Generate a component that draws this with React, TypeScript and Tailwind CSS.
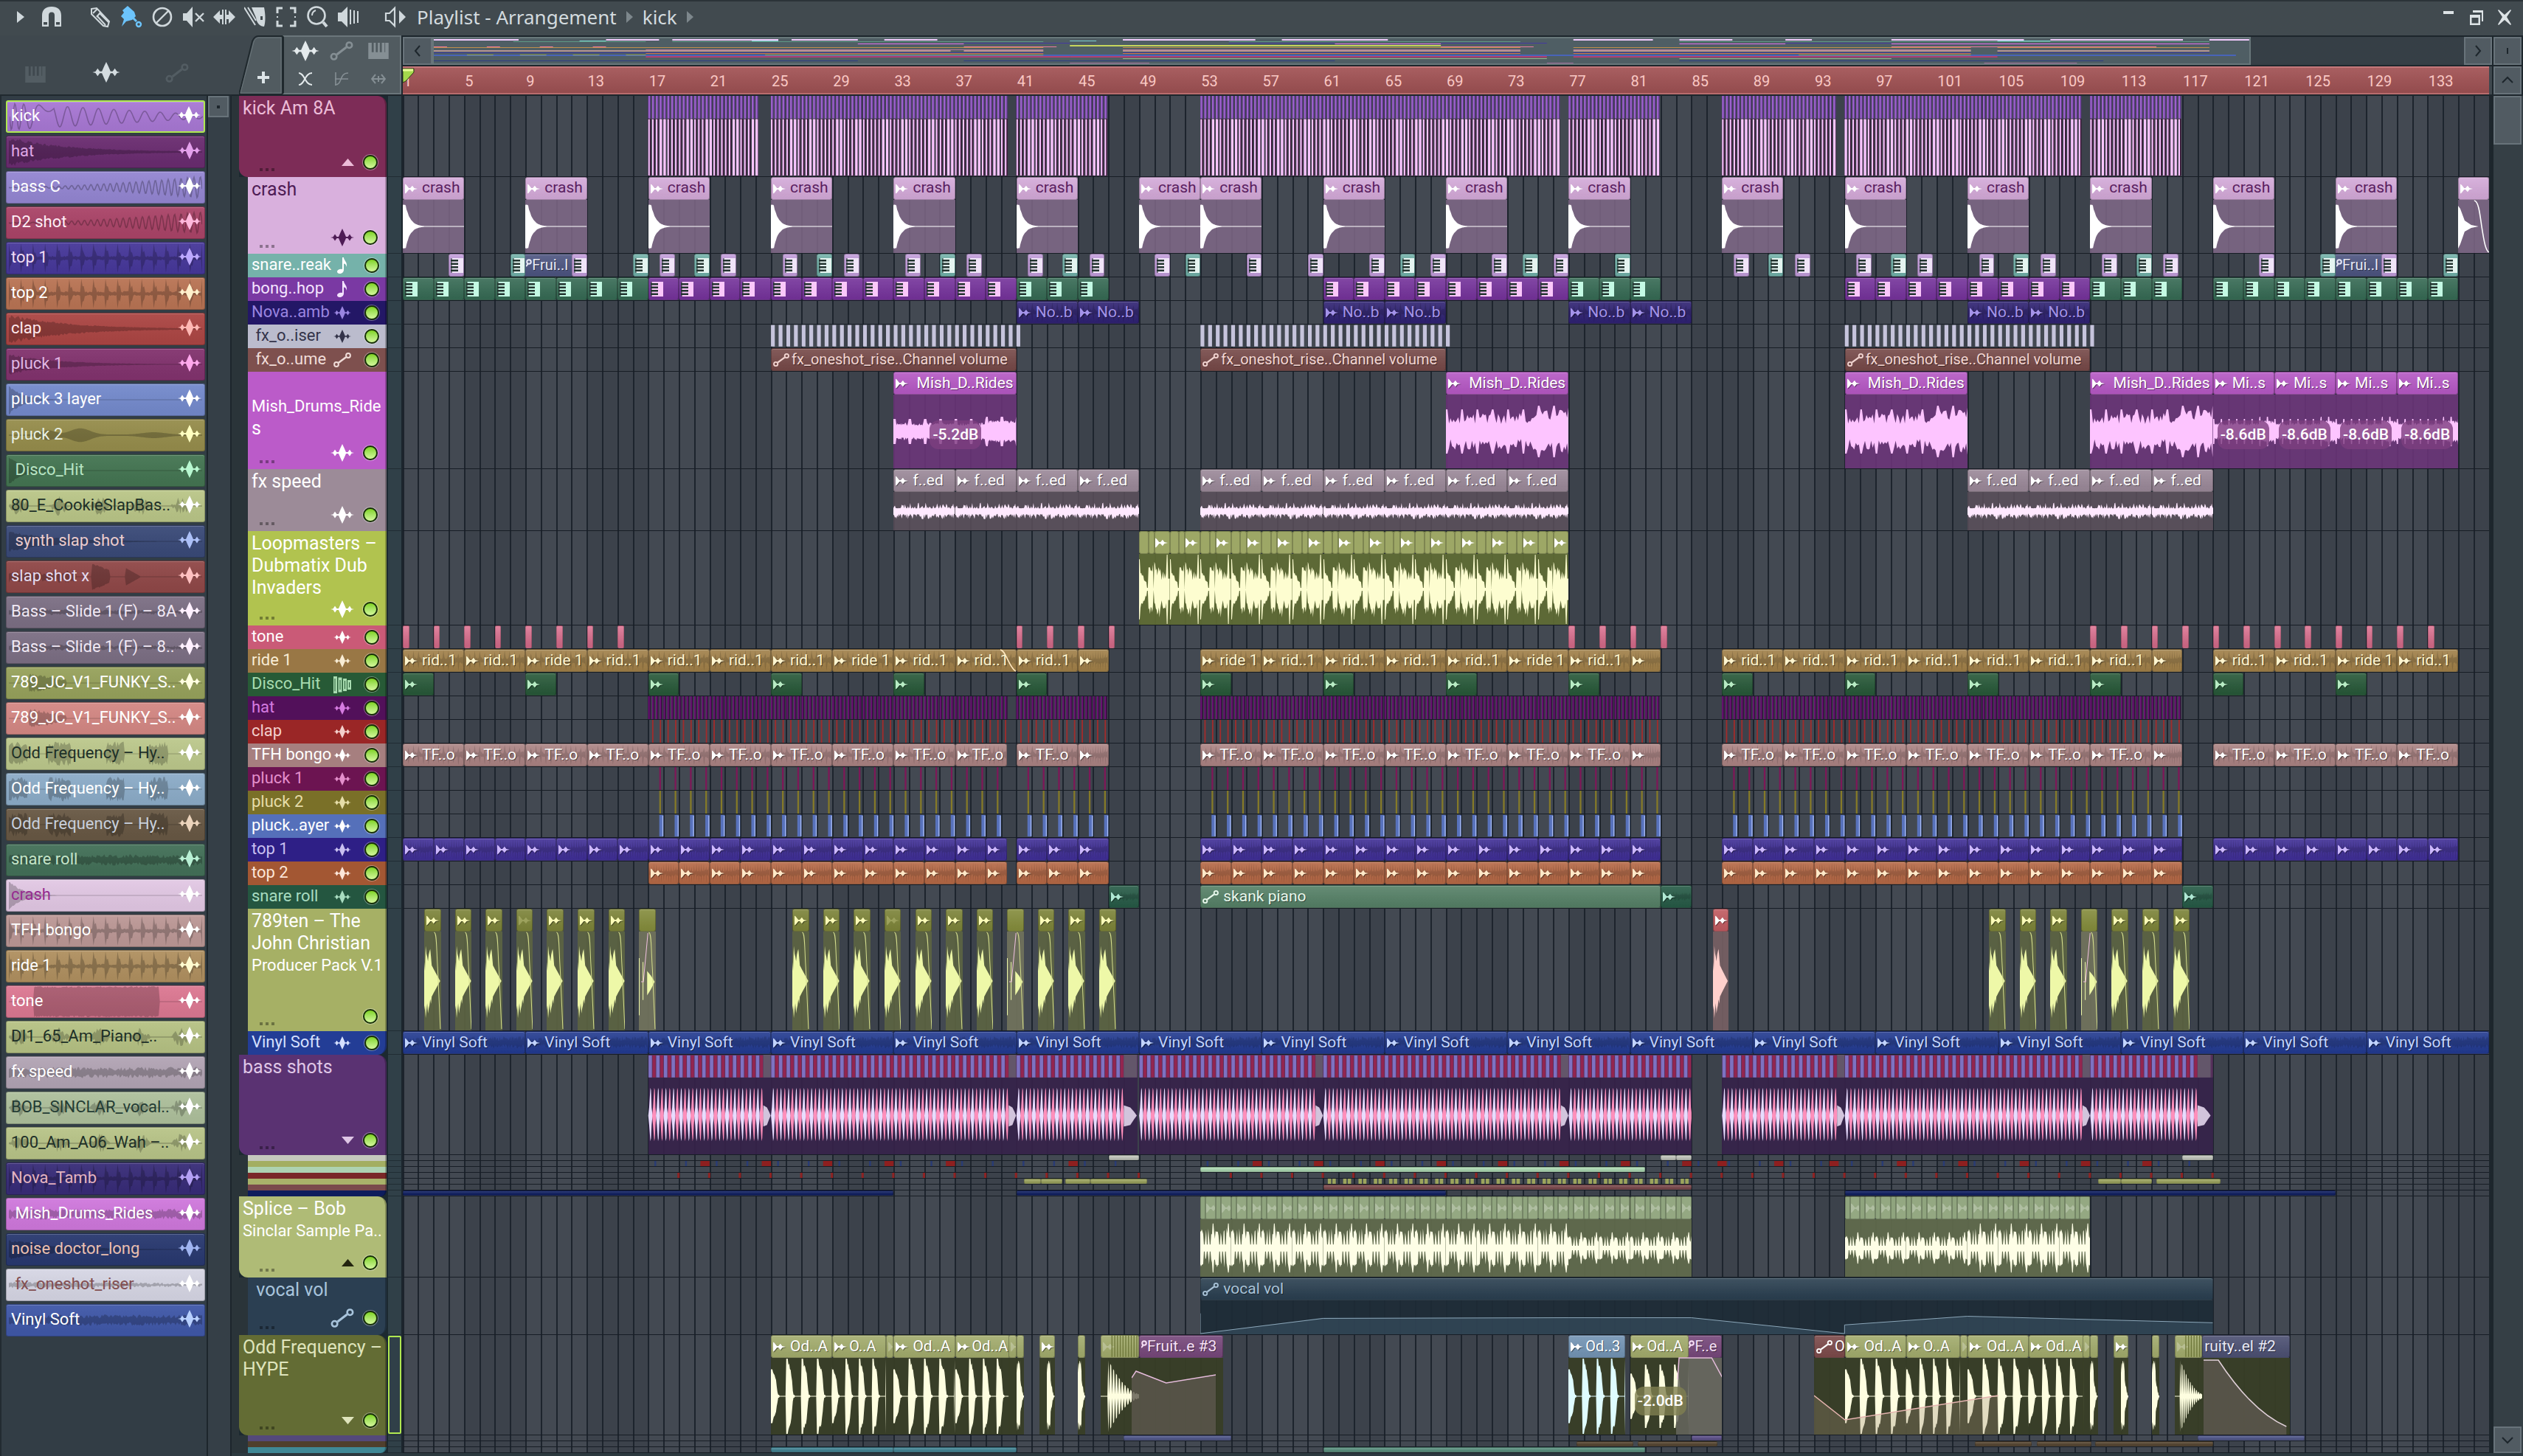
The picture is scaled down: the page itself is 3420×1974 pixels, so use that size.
import type { ReactNode } from 'react'

const BARS = 136

type Range = [number, number]
type IconKind = 'wave' | 'auto' | 'note' | 'bars' | 'up' | 'down' | 'none'

const pct = (bars: number) => `${(bars / BARS) * 100}%`

const rng = (seed: number) => () => {
  seed = (seed * 1664525 + 1013904223) % 4294967296
  return seed / 4294967296
}

// closed, mirrored waveform in a box n wide and 100 high
function wavePath(seed: number, n: number, env: (t: number, r: number) => number) {
  const r = rng(seed)
  let top = ''
  let bottom = ''
  for (let i = 0; i <= n; i++) {
    const a = Math.min(1, env(i / n, r())) * 50
    const b = Math.min(1, env(i / n, r())) * 50
    top += `L${i} ${(50 - a).toFixed(1)}`
    bottom = `L${i} ${(50 + b).toFixed(1)}${bottom}`
  }
  return `M0 50${top}${bottom}Z`
}

const split = (s: number, e: number, step: number): Range[] => {
  const out: Range[] = []
  for (let b = s; b < e - 0.01; b += step) out.push([b, Math.min(b + step, e)])
  return out
}
const steps = (s: number, e: number, step: number) => split(s, e, step).map(([b]) => b)

const PATHS = {
  crash: wavePath(3, 83, (t, r) => Math.max(0.015, t < 0.05 ? 0.78 + r * 0.06 : (0.72 + r * 0.08) * Math.exp(-(t - 0.05) * 13))),
  mish: wavePath(11, 160, (t, r) => (t % 0.125 < 0.02 ? 0.34 : 0.16 + r * 0.08) + (t > 0.75 ? 0.06 : 0)),
  mishLoud: wavePath(19, 80, (t, r) => (t % 0.125 < 0.02 ? 0.6 : 0.2 + r * 0.3) + (t > 0.7 ? 0.1 : 0)),
  speed: wavePath(23, 80, (_, r) => 0.14 + r * r * 0.3),
  loop: wavePath(31, 42, (t, r) => {
    if (t < 0.03) return 0.85
    if (t < 0.26) return 0.52 - t * 1.7 + r * 0.1
    if (t < 0.3) return 0.04
    if (t < 0.47) return 0.45 + r * 0.3
    if (t < 0.5) return 0.02
    if (t < 0.72) return 0.35 + r * 0.45
    if (t < 0.9) return 0.22 + r * 0.35
    return t < 0.95 ? 0.98 : 0.3
  }),
  hit: wavePath(41, 84, (t, r) => {
    const p = (t * 4) % 1
    const peak = t < 0.2 ? 0.7 : 0.98
    if (p < 0.12) return peak
    if (p < 0.44) return peak * (0.9 - r * 0.12 - 0.75 * (p / 0.44) ** 4)
    return p < 0.56 ? 0.04 : 0.012
  }),
  pack: wavePath(47, 22, (t, r) => {
    if (t < 0.12) return 0.72 * r + 0.2
    if (t < 0.45) return 0.36 + r * 0.32
    return Math.max(0, (0.96 - t) * 0.62)
  }),
  chop: wavePath(73, 22, (t, r) => (t < 0.5 ? 0.6 + r * 0.35 : Math.max(0.02, 0.95 - t - r * 0.1))),
  splice: wavePath(53, 42, (t, r) => {
    const p = (t * 2) % 1
    if (p < 0.18) return 0.55 + r * 0.15
    if (p > 0.78 && p < 0.86) return 0.85
    return Math.floor(p * 10) % 2 ? 0.4 * r + 0.3 : 0.12
  }),
  vinyl: wavePath(61, 170, (t, r) => (t > 0.45 ? 0.15 : 0.05) + r * 0.45),
  ticks: wavePath(67, 60, (t, r) => (Math.floor(t * 60) % 5 === 0 ? 0.6 + r * 0.4 : 0.1 + r * 0.25)),
}

function Wave({ d, n, color, opacity = 1 }: { d: string; n: number; color: string; opacity?: number }) {
  return (
    <svg className="h-full w-full" viewBox={`0 0 ${n} 100`} preserveAspectRatio="none" aria-hidden="true">
      <path d={d} fill={color} opacity={opacity} />
    </svg>
  )
}

function WaveIcon({ className }: { className: string }) {
  return (
    <svg className={className} viewBox="0 0 32 24" fill="currentColor" aria-hidden="true">
      <path d="M0 12L3.5 11.2L6 7.5L8.5 11H11L13.6 5L16 0L18.4 5L21 11H23.5L26 7.5L28.5 11.2L32 12L28.5 12.8L26 16.5L23.5 13H21L18.4 19L16 24L13.6 19L11 13H8.5L6 16.5L3.5 12.8Z" />
    </svg>
  )
}

function AutoIcon({ className }: { className: string }) {
  return (
    <svg className={className} viewBox="0 0 24 20" fill="none" stroke="currentColor" strokeWidth="2" aria-hidden="true">
      <circle cx="4" cy="16" r="2.9" />
      <circle cx="20" cy="4" r="2.9" />
      <path d="M7 13.8L17 6.2" strokeWidth="2.4" />
    </svg>
  )
}

function ClipWaveIcon({ className = '' }: { className?: string }) {
  return (
    <svg className={`h-[14px] w-[17px] shrink-0 ${className}`} viewBox="0 0 18 14" fill="currentColor" aria-hidden="true">
      <path d="M0 0L2 1.5L5.5 6H7.5L10.5 2.5L13.2 6L18 7L13.2 8L10.5 11.5L7.5 8H5.5L2 12.5L0 14Z" />
    </svg>
  )
}

function KeysIcon({ color }: { color: string }) {
  return (
    <svg className="h-5 w-[17px] shrink-0" viewBox="0 0 17 20" aria-hidden="true">
      <path d="M1 0H17V20H1Z" fill={color} />
      <path d="M0 3.2H10M0 7.7H10M0 12.2H10M0 16.7H10" stroke="#22332f" strokeWidth="2.6" />
      <path d="M1 0V20" stroke="#22332f" strokeWidth="1" />
    </svg>
  )
}

function PianoIcon({ className }: { className: string }) {
  return (
    <svg className={className} viewBox="0 0 30 24" fill="currentColor" aria-hidden="true">
      <path d="M0 0H5V14H8V0H11V14H14V0H17V14H20V0H24V14H25V0H30V24H0Z" />
    </svg>
  )
}

type ClipProps = {
  s: number
  e: number
  color: string
  text?: string
  label?: string
  icon?: 'wave' | 'auto' | 'cut' | 'keys' | 'faint' | 'none'
  tight?: boolean
  inner?: string
  innerN?: number
  body?: string
  children?: ReactNode
}

function Clip({ s, e, color, text = '#ffffff', label, icon = 'wave', tight, inner, innerN = 60, body, children }: ClipProps) {
  return (
    <div className="absolute inset-y-0 flex flex-col overflow-hidden" style={{ left: pct(s), width: pct(e - s) }}>
      <div
        className="relative flex h-[31px] shrink-0 items-center overflow-hidden rounded-[3px] border border-black/25 bg-gradient-to-b from-white/10 to-black/5 pl-[2px] shadow-[inset_0_1px_0_rgba(255,255,255,0.18)]"
        style={{ backgroundColor: color, color: text }}
      >
        {inner && (
          <div className="absolute inset-0">
            <Wave d={inner} n={innerN} color="#000000" opacity={0.14} />
          </div>
        )}
        {icon === 'wave' && <ClipWaveIcon className="relative drop-shadow-[1px_1px_0_rgba(0,0,0,0.4)]" />}
        {icon === 'faint' && <ClipWaveIcon className="relative opacity-25" />}
        {icon === 'auto' && <AutoIcon className="relative h-5 w-[22px] shrink-0" />}
        {icon === 'cut' && (
          <svg className="h-5 w-2 shrink-0" viewBox="0 0 8 20" fill="none" stroke="currentColor" strokeWidth="2" aria-hidden="true">
            <circle cx="4" cy="5" r="2.8" />
            <path d="M2.500 8L0 11" />
          </svg>
        )}
        {icon === 'keys' && <KeysIcon color={text} />}
        {label && (
          <span
            className={`relative pb-[2px] leading-7 whitespace-pre ${tight ? 'text-[20px]' : 'text-[21px]'} ${icon === 'none' || icon === 'cut' ? '' : tight ? 'pl-[3px]' : 'pl-[6px]'} ${text === '#5a2060' ? '' : '[text-shadow:1px_1px_0_rgba(0,0,0,0.45)]'}`}
          >
            {label}
          </span>
        )}
      </div>
      {body && (
        <div className="relative min-h-0 flex-1" style={{ backgroundColor: body }}>
          {children}
        </div>
      )}
    </div>
  )
}

// many hair-thin clips of one lane
function Stripes({ at, w, color, y = 0, h = 100, opacity = 1 }: { at: number[]; w: number; color: string; y?: number; h?: number; opacity?: number }) {
  return (
    <svg className="absolute inset-0 h-full w-full" viewBox={`0 0 ${BARS} 100`} preserveAspectRatio="none" aria-hidden="true">
      {at.map((b) => (
        <rect key={b} x={b} y={y} width={w} height={h} fill={color} opacity={opacity} />
      ))}
    </svg>
  )
}

function Strip({ s, e, color }: { s: number; e: number; color: string }) {
  return (
    <div
      className="absolute inset-y-0 rounded-[2px] border border-black/20 bg-gradient-to-b from-white/15 to-black/10"
      style={{ left: pct(s), width: pct(e - s), backgroundColor: color }}
    />
  )
}

function Db({ value, className }: { value: string; className: string }) {
  return (
    <span className={`absolute rounded-xl px-1 text-[21px] leading-[39px] font-medium text-white ${className}`}>
      {value}
    </span>
  )
}

const FULL: Range[] = [[16, 39.4], [40, 46], [52, 82], [86, 116]]
const inFull = (step: number, off = 0) => FULL.flatMap(([s, e]) => steps(s + off, e, step))

function KickLane() {
  const groups: Range[] = [[16, 23.2], [24, 39.4], [40, 46], [52, 75.5], [76, 82], [86, 93.4], [94, 109.4], [110, 116]]
  const at = groups.flatMap(([s, e]) => steps(s, e, 0.25))
  const wide = at.filter((_, i) => [3, 4, 10, 11].includes(i % 12))
  return (
    <>
      <Stripes at={at} w={0.17} y={0} h={28} color="#5b3684" />
      <Stripes at={at} w={0.11} y={0} h={28} color="#9c62cc" />
      <Stripes at={at} w={0.17} y={28.5} h={71} color="#3a1236" />
      <Stripes at={at} w={0.1} y={29} h={70} color="#f8c6ff" />
      <Stripes at={wide} w={0.15} y={29} h={70} color="#f8c6ff" />
    </>
  )
}

const CRASHES = [0, 8, 16, 24, 32, 40, 48, 52, 60, 68, 76, 86, 94, 102, 110, 118, 126, 134]

function CrashLane() {
  return CRASHES.map((b) => (
    <Clip key={b} s={b} e={b === 134 ? 136 : b + 4} color="#d3a9d8" text="#ffffff" icon="none" body="rgba(128,104,136,0.85)">
      <div className="absolute -top-[22px] left-[3px] h-[14px] w-[17px] text-white">
        <ClipWaveIcon className="block" />
      </div>
      {b !== 134 && <span className="absolute -top-[31px] left-[26px] text-[21px] leading-7 text-[#5a2060]">crash</span>}
      {b === 134 ? (
        <svg className="h-full w-full" viewBox="0 0 42 72" preserveAspectRatio="none" aria-hidden="true">
          <path d="M0 8L3 12L9 28L18 34L28 36L18 38L9 43L3 60L0 66Z" fill="#fff" />
          <path d="M22 1C28 1 30 20 32 34C36 60 38 68 42 71" fill="none" stroke="#fff" strokeWidth="1.6" />
        </svg>
      ) : (
        <Wave d={PATHS.crash} n={83} color="#fff" />
      )}
    </Clip>
  ))
}

function SnareLane() {
  const groups = [16, 24, 32, 40, 86, 94, 102, 110]
  const pink = [3, 11, ...groups.flatMap((g) => [g + 0.75, g + 4.75]), 49, 55, 59, 63, 67, 71, 75, 121, 129]
  const teal = [7, 15, ...groups.map((g) => g + 3), 51, 65, 73, 79, 125, 133]
  return (
    <>
      {[7.9, 125.9].map((b) => (
        <Clip key={b} s={b} e={b + 3.2} color="#4c5480" icon="cut" label="Frui..l" text="#e8e8f4" tight />
      ))}
      {pink.map((b) => (
        <Clip key={b} s={b} e={b + 1} color="#c09ad8" icon="keys" text="#f0e4f8" />
      ))}
      {teal.map((b) => (
        <Clip key={b} s={b} e={b + 1} color="#6faea6" icon="keys" text="#e4f4f0" />
      ))}
    </>
  )
}

function BongoPatternLane() {
  const green = [...split(0, 16, 2), ...split(40, 46, 2), ...split(76, 82, 2), ...split(110, 116, 2), ...split(118, 134, 2)]
  const purple = [...split(16, 40, 2), ...split(60, 76, 2), ...split(94, 110, 2)]
  return (
    <>
      {green.map(([s, e]) => (
        <Clip key={s} s={s} e={e} color="#366a54" icon="keys" text="#c4fae4" />
      ))}
      {purple.map(([s, e]) => (
        <Clip key={s} s={s} e={e} color="#75339b" icon="keys" text="#fbc8fa" />
      ))}
    </>
  )
}

const rideLabel = (s: number) => ([8, 28, 52, 72, 126].includes(s) ? 'ride 1' : 'rid..1')

function LoopLane({ ranges, color, text, label }: { ranges: Range[]; color: string; text?: string; label?: (s: number) => string }) {
  return ranges.map(([s, e]) => (
    <Clip key={s} s={s} e={e} color={color} text={text} inner={PATHS.ticks} tight={e - s < 4} label={label && e - s > 3 ? label(s) : undefined} />
  ))
}

function RideLane() {
  return (
    <>
      <LoopLane ranges={[...split(0, 44, 4), [44, 46], ...four]} color="#a07f48" text="#fff6d0" label={rideLabel} />
      <svg className="absolute inset-y-0 h-full" style={{ left: pct(38.9), width: pct(1.1) }} viewBox="0 0 23 31" preserveAspectRatio="none" aria-hidden="true">
        <path d="M1 1C9 2 12 24 22 30" fill="none" stroke="#ffe8c0" strokeWidth="1.6" />
      </svg>
    </>
  )
}

function MishLane() {
  const clips: [number, number, string, string?][] = [
    [32, 40, 'Mish_D..Rides', '-5.2dB'], [68, 76, 'Mish_D..Rides'], [94, 102, 'Mish_D..Rides'], [110, 118, 'Mish_D..Rides'],
    [118, 122, 'Mi..s', '-8.6dB'], [122, 126, 'Mi..s', '-8.6dB'], [126, 130, 'Mi..s', '-8.6dB'], [130, 134, 'Mi..s', '-8.6dB'],
  ]
  return clips.map(([s, e, label, db]) => (
    <Clip key={s} s={s} e={e} color="#b558c4" label={`${e - s > 4 ? ' ' : ''}${label}`} body="rgba(108,52,122,0.88)">
      <Wave d={db ? PATHS.mish : PATHS.mishLoud} n={db ? 160 : 80} color="#fdc4ff" />
      {db && <Db value={db} className={e - s > 4 ? 'top-[35px] left-[49px] bg-[#7d3f80]/80' : 'top-[35px] left-[6px] bg-[#7d3f80]/80'} />}
    </Clip>
  ))
}

function SpeedLane() {
  return [...split(32, 48, 4), ...split(52, 76, 4), ...split(102, 118, 4)].map(([s, e]) => (
    <Clip key={s} s={s} e={e} color="#9a8898" label="f..ed" body="rgba(92,80,92,0.85)">
      <Wave d={PATHS.speed} n={80} color="#ffe9ff" />
    </Clip>
  ))
}

function DubLane() {
  return split(48, 76, 2).map(([s, e]) => (
    <div key={s}>
      <Clip s={s} e={e} color="#5e6b36" icon="none" body="rgba(96,108,52,0.92)">
        <Wave d={PATHS.loop} n={42} color="#fdfdd0" />
      </Clip>
      <div className="absolute top-0 h-[31px]" style={{ left: pct(s), width: pct(2) }}>
        <div className="flex h-full">
          <div className="w-[30%] rounded-[3px] border border-black/20 bg-[#9da766]" />
          <div className="w-[20%] rounded-[3px] border border-black/20 bg-[#9da766]" />
          <div className="flex w-[50%] items-center rounded-[3px] border border-black/20 bg-[#9da766] text-white">
            <ClipWaveIcon />
          </div>
        </div>
      </div>
    </div>
  ))
}

function PackLane() {
  const at = [...steps(1.4, 15, 2), ...steps(25.4, 39, 2), 41.4, 43.4, 45.4, 103.4, 105.4, 107.4, 111.4, 113.4, 115.4]
  return (
    <>
      {at.map((b, i) => (
        <Clip key={b} s={b} e={b + 1.08} color="#7c8338" text="#fbfbb8" icon={i === 3 || i === 10 ? 'faint' : 'wave'} body="rgba(92,100,66,0.92)">
          <Wave d={PATHS.pack} n={22} color="#eef8a8" />
          <svg className="absolute inset-0 h-full w-full" viewBox="0 0 22 130" preserveAspectRatio="none" aria-hidden="true">
            <path d="M13 1C17 1 16 20 18 50L21.5 128" fill="none" stroke="#d3dc8c" strokeWidth="1" />
          </svg>
        </Clip>
      ))}
      {[15.4, 39.4, 109.4].map((b) => (
        <Clip key={b} s={b} e={b + 1.08} color="#848c3c" icon="none" body="rgba(112,114,92,0.95)">
          <svg className="h-full w-full" viewBox="0 0 22 130" preserveAspectRatio="none" aria-hidden="true">
            <path d="M0 35H1V110H0ZM5 40H6V90H5ZM11 52L16 58L21 66L16 76L11 84Z" fill="#eef8a8" />
            <path d="M3 66H6L12 2" fill="none" stroke="#f0c0e0" />
            <path d="M13 1C17 1 16 20 18 50L21.5 128" fill="none" stroke="#d3dc8c" />
          </svg>
        </Clip>
      ))}
      <Clip s={85.4} e={86.4} color="#c05a60" icon="wave" body="rgba(120,96,100,0.9)">
        <Wave d={PATHS.pack} n={22} color="#ffd0cc" />
      </Clip>
    </>
  )
}

function BassLane() {
  const tails = [23.5, 39.5, 47, 59.5, 75.5, 93.5, 109.5, 117]
  const free = (b: number) => !tails.some((t) => b >= t - 0.01 && b < t + 0.5) && !(b >= 47 && b < 48) && !(b >= 117)
  const red = [...steps(16, 84, 0.5), ...steps(86, 118, 0.5)].map((b) => b + 0.25).filter((b) => free(b))
  const violet = [...steps(16, 84, 0.5), ...steps(86, 118, 0.5)].filter((b) => free(b))
  const spike = (b: number) =>
    `M${b} 71L${b + 0.06} 60L${b + 0.14} 33L${b + 0.18} 36L${b + 0.22} 60L${b + 0.26} 67L${b + 0.26} 75L${b + 0.22} 84L${b + 0.18} 102L${b + 0.14} 106L${b + 0.06} 84Z`
  const blocks: Range[] = [[16, 47.9], [48, 84], [86, 118]]
  return (
    <>
      {blocks.map(([s, e]) => (
        <div key={s} className="absolute top-[31px] bottom-0 bg-[#36234a]/92" style={{ left: pct(s), width: pct(e - s) }} />
      ))}
      <svg className="absolute inset-0 h-full w-full" viewBox={`0 0 ${BARS} 136`} preserveAspectRatio="none" aria-hidden="true">
        {blocks.map(([s, e]) => (
          <rect key={s} x={s} y="0" width={e - s} height="31" fill="#57305c" />
        ))}
        {violet.map((b) => (
          <rect key={b} x={b + 0.02} y="1" width="0.22" height="30" fill="#7d72c2" />
        ))}
        {red.map((b) => (
          <rect key={b} x={b + 0.03} y="1" width="0.2" height="30" fill="#93254f" />
        ))}
        <g transform="translate(0 12)">
          <path d={red.map(spike).join('')} fill="#ff8fbb" />
          <path d={violet.map(spike).join('')} fill="#e8dcff" />
          {tails.map((t) => {
            const w = t === 47 || t === 117 ? 0.85 : 0.48
            return (
              <g key={t}>
                <rect x={t} y="-12" width={w} height="31" fill="#63566a" />
                <path d={`M${t} 57L${t + w * 0.5} 60L${t + w * 0.8} 66L${t + w} 71L${t + w * 0.8} 76L${t + w * 0.5} 84L${t} 86Z`} fill="#d2c4dc" />
              </g>
            )
          })}
        </g>
      </svg>
    </>
  )
}

function SpliceLane() {
  return [...split(52, 84, 2), ...split(94, 110, 2)].map(([s, e]) => {
    const quiet = (s >= 76 && s < 84) || (s >= 94 && s < 102)
    return (
      <div key={s}>
        <Clip s={s} e={e} color="#7a8c66" icon="none" body="rgba(96,106,76,0.95)">
          <div className={quiet ? 'h-full py-[14px]' : 'h-full'}>
            <Wave d={PATHS.splice} n={42} color="#fefee6" />
          </div>
        </Clip>
        <div className="absolute top-0 flex h-[31px]" style={{ left: pct(s), width: pct(2) }}>
          {[0, 1].map((i) => (
            <div key={i} className="flex w-1/2">
              <div className="w-1/3 rounded-[2px] border border-black/20 bg-[#8fa47e]" />
              <div className="w-2/3 overflow-hidden rounded-[2px] border border-black/20 bg-[#94a882] pt-2 text-white">
                <ClipWaveIcon className="opacity-25" />
              </div>
            </div>
          ))}
        </div>
      </div>
    )
  })
}

function VocalLane() {
  return (
    <Clip s={52} e={118} color="#2a3f50" text="#a9c3d8" icon="auto" label="vocal vol" body="rgba(29,43,54,0.92)">
      <svg className="h-full w-full" viewBox="0 0 66 47" preserveAspectRatio="none" aria-hidden="true">
        <path d="M0 46L8 24H32L42 46V34L50 22L66 31V47H0Z" fill="#3a5264" opacity="0.6" />
        <path d="M0 18V46L8 25L24 24H32L42 46V34L50 22L66 31" fill="none" stroke="#8ba6b8" strokeWidth="1" vectorEffect="non-scaling-stroke" />
      </svg>
    </Clip>
  )
}

function HypeLane() {
  const dark = 'rgba(56,62,38,0.95)'
  const olive = '#a2ab6c'
  const block = (o: number) => (
    <>
      {([[0, 4, 'Od..A'], [4, 7.5, 'O..A'], [8, 12, 'Od..A'], [12, 15.6, 'Od..A']] as [number, number, string][]).map(([s, e, label]) => (
        <Clip key={s} s={o + s} e={o + e} color={olive} label={label} tight={e - s < 4} body={dark}>
          <Wave d={PATHS.hit} n={84} color="#fefee0" />
        </Clip>
      ))}
      {[7.5, 15.5, 16].map((b) => (
        <Clip key={b} s={o + b} e={o + b + 0.5} color={olive} icon={b === 16 ? 'none' : 'faint'} body={dark}>
          {b === 16 && <Wave d={PATHS.chop} n={22} color="#fefee0" />}
        </Clip>
      ))}
      <Clip s={o + 17.5} e={o + 18.5} color={olive} body={dark}>
        <div className="ml-auto h-full w-1/2">
          <Wave d={PATHS.chop} n={22} color="#fefee0" />
        </div>
      </Clip>
      <Clip s={o + 20} e={o + 20.5} color={olive} icon="none" body={dark}>
        <Wave d={PATHS.chop} n={22} color="#fefee0" />
      </Clip>
    </>
  )
  const roll = (s: number, e: number) => (
    <>
      <Clip s={s} e={e} color={olive} icon="faint" body={dark}>
        <Wave d={wavePath(71, 40, (t) => (t < 0.2 ? 0.01 : Math.floor(t * 40) % 3 ? (1.1 - t) ** 2 * 1.1 + 0.05 : 0.05))} n={40} color="#fefee0" />
      </Clip>
      <Stripes at={steps(s + 0.7, e - 0.1, 0.18)} w={0.06} h={22} color="#6c7538" />
    </>
  )
  return (
    <>
      <Clip s={92} e={94} color="#7c4a4a" icon="auto" label="O" body={dark} tight />
      {block(24)}
      {block(94)}
      <Clip s={48} e={53.5} color="#76477a" text="#f6e0f6" icon="cut" label="Fruit..e #3" body={dark} />
      {roll(45.5, 48)}
      <svg className="absolute bottom-0 h-[105px]" style={{ left: pct(47.5), width: pct(5.5) }} viewBox="0 0 115 105" preserveAspectRatio="none" aria-hidden="true">
        <path d="M0 28L6 19L47 35L115 24V105H0Z" fill="#5c574e" opacity="0.8" />
        <path d="M0 28L6 19L47 35L115 24" fill="none" stroke="#e6bcdc" strokeWidth="1.5" />
      </svg>
      <Clip s={76} e={79.7} color="#7394b4" label="Od..3" body={dark} tight>
        <Wave d={PATHS.hit} n={84} color="#dffcff" />
      </Clip>
      <Clip s={83.7} e={86} color="#76477a" text="#f6e0f6" icon="cut" label="F..e" tight body="rgba(100,100,92,0.95)" />
      <Clip s={80} e={83.8} color={olive} label="Od..A" body={dark} tight>
        <div className="h-full py-2">
          <Wave d={PATHS.hit} n={84} color="#fefee0" />
        </div>
      </Clip>
      <svg className="absolute bottom-0 h-[105px]" style={{ left: pct(83), width: pct(3) }} viewBox="0 0 62 105" preserveAspectRatio="none" aria-hidden="true">
        <path d="M0 105V80L4 1H52L62 25V105Z" fill="#66665e" opacity="0.85" />
        <path d="M2 30L4 1H48L62 27" fill="none" stroke="#e6bcdc" strokeWidth="1.5" />
      </svg>
      <div className="absolute top-[70px]" style={{ left: pct(80.3), width: pct(3.4) }}>
        <Db value="-2.0dB" className="left-0 bg-[#7f8050]/80" />
      </div>
      <svg className="absolute bottom-0 h-[105px]" style={{ left: pct(92), width: pct(12) }} viewBox="0 0 250 105" preserveAspectRatio="none" aria-hidden="true">
        <path d="M0 52L42 85L250 52V105H0Z" fill="#a08a78" opacity="0.3" />
        <path d="M0 52L42 85L250 52" fill="none" stroke="#e6b4b0" strokeWidth="1.5" />
      </svg>
      <Clip s={117.3} e={123} color="#4c5072" text="#e8e8f4" icon="none" label="ruity..el #2" body={dark} />
      {roll(115.5, 117.3)}
      <svg className="absolute bottom-0 h-[105px]" style={{ left: pct(117.4), width: pct(5.4) }} viewBox="0 0 112 105" preserveAspectRatio="none" aria-hidden="true">
        <path d="M0 4H20C50 50 80 80 112 94V105H0Z" fill="#5c574e" opacity="0.85" />
        <path d="M0 4H20C50 50 80 80 112 94" fill="none" stroke="#e0d0d8" strokeWidth="1.5" />
      </svg>
    </>
  )
}

type Track = {
  name: string[]
  h: string
  color: string
  text: string
  icon: IconKind
  group?: boolean
  last?: boolean
  selected?: boolean
  lane: ReactNode
}

const strips = (list: [number, number][], color: string) => list.map(([s, e]) => <Strip key={s} s={s} e={e} color={color} />)
const mini = (color: string, lane: ReactNode, last = false): Track => ({ name: [], h: 'h-2', color, text: '', icon: 'none', last, lane })

const four: Range[] = [...split(52, 80, 4), [80, 82], ...split(86, 114, 4), [114, 116], ...split(118, 134, 4)]
const two: Range[] = [...split(40, 46, 2), ...split(52, 82, 2), ...split(86, 116, 2)]

const TRACKS: Track[] = [
  { name: ['kick Am 8A'], h: 'h-[110px]', color: '#7d2c57', text: '#ecbcd8', icon: 'up', group: true, lane: <KickLane /> },
  { name: ['crash'], h: 'h-[104px]', color: '#d9b0dd', text: '#4e1c55', icon: 'wave', lane: <CrashLane /> },
  { name: ['snare..reak'], h: 'h-8', color: '#75b2aa', text: '#ffffff', icon: 'note', lane: <SnareLane /> },
  { name: ['bong..hop'], h: 'h-8', color: '#7a39a3', text: '#f4e4ff', icon: 'note', lane: <BongoPatternLane /> },
  { name: ['Nova..amb'], h: 'h-8', color: '#231766', text: '#9a85e0', icon: 'wave', lane: <LoopLane ranges={[[40, 44], [44, 48], [60, 64], [64, 68], [76, 80], [80, 84], [102, 106], [106, 110]]} color="#2f2272" text="#a493ea" label={() => 'No..b'} /> },
  { name: [' fx_o..iser'], h: 'h-8', color: '#bbbccd', text: '#34344a', icon: 'wave', lane: <Stripes at={[...steps(24, 40.5, 0.5), ...steps(52, 68.5, 0.5), ...steps(94, 110.5, 0.5)]} w={0.25} y={2} h={94} color="#c6c4dc" /> },
  { name: [' fx_o..ume'], h: 'h-8', color: '#7e504e', text: '#f0dcd8', icon: 'auto', lane: [24, 52, 94].map((b) => <Clip key={b} s={b} e={b + 16} color="#764948" text="#f3d6d2" icon="auto" tight label="fx_oneshot_rise..Channel volume" />) },
  { name: [' ', 'Mish_Drums_Ride', 's'], h: 'h-[132px]', color: '#bb5bc9', text: '#ffffff', icon: 'wave', lane: <MishLane /> },
  { name: ['fx speed'], h: 'h-[84px]', color: '#9c8b98', text: '#ffffff', icon: 'wave', lane: <SpeedLane /> },
  { name: ['Loopmasters –', 'Dubmatix Dub', 'Invaders'], h: 'h-[128px]', color: '#b1c34f', text: '#ffffff', icon: 'wave', lane: <DubLane /> },
  { name: ['tone'], h: 'h-8', color: '#ca5a77', text: '#ffffff', icon: 'wave', lane: strips([...steps(0, 16, 2), 40, 42, 44, 46, 76, 78, 80, 82, ...steps(110, 134, 2)].map((b) => [b, b + 0.42]), '#dc6e8e') },
  { name: ['ride 1'], h: 'h-8', color: '#997745', text: '#f8ecd4', icon: 'wave', lane: <RideLane /> },
  { name: ['Disco_Hit'], h: 'h-8', color: '#275a36', text: '#a8dcb0', icon: 'bars', lane: [0, 8, 16, 24, 32, 40, 52, 60, 68, 76, 86, 94, 102, 110, 118, 126].map((b) => <Clip key={b} s={b} e={b + 2} color="#275838" text="#b8ecc4" />) },
  { name: ['hat'], h: 'h-8', color: '#52105a', text: '#d57be0', icon: 'wave', lane: <><Stripes at={inFull(0.25)} w={0.17} color="#36103f" /><Stripes at={inFull(0.25)} w={0.09} color="#6c1276" /></> },
  { name: ['clap'], h: 'h-8', color: '#9a2626', text: '#f3cfcb', icon: 'wave', lane: <Stripes at={inFull(0.5, 0.25)} w={0.09} color="#a02c2c" /> },
  { name: ['TFH bongo'], h: 'h-8', color: '#a67f7f', text: '#ffffff', icon: 'wave', lane: <LoopLane ranges={[...split(0, 39.4, 4), [40, 44], [44, 46], ...four]} color="#aa8282" label={() => 'TF..o'} /> },
  { name: ['pluck 1'], h: 'h-8', color: '#6c1451', text: '#e48fcc', icon: 'wave', lane: <Stripes at={inFull(1, 0.72)} w={0.11} color="#7e1858" /> },
  { name: ['pluck 2'], h: 'h-8', color: '#7a7028', text: '#e6dda8', icon: 'wave', lane: <Stripes at={inFull(1, 0.72)} w={0.11} color="#857a28" /> },
  { name: ['pluck..ayer'], h: 'h-8', color: '#5570ba', text: '#ffffff', icon: 'wave', lane: <><Stripes at={inFull(1, 0.72)} w={0.27} y={3} h={94} color="#5872bc" /><Stripes at={inFull(1, 0.92)} w={0.06} y={6} h={90} color="#a9bcf4" /></> },
  { name: ['top 1'], h: 'h-8', color: '#2e1f86', text: '#c9c0f0', icon: 'wave', lane: <LoopLane ranges={[...split(0, 39.4, 2), ...two, ...split(118, 134, 2)]} color="#402f96" text="#cdb8ff" /> },
  { name: ['top 2'], h: 'h-8', color: '#a35733', text: '#fce6d8', icon: 'wave', lane: <LoopLane ranges={[...split(16, 39.4, 2), ...two]} color="#b56845" text="#ffe9c8" /> },
  { name: ['snare roll'], h: 'h-8', color: '#245640', text: '#a8dcc0', icon: 'wave', lane: <>{[46, 82, 116].map((b) => <Clip key={b} s={b} e={b + 2} color="#265a46" text="#b0e8d4" inner={PATHS.speed} innerN={80} />)}<Clip s={52} e={82} color="#558066" text="#e8f8ec" icon="auto" label="skank piano" /></> },
  { name: ['789ten – The', 'John Christian', 'Producer Pack V.1'], h: 'h-[166px]', color: '#a6b065', text: '#ffffff', icon: 'none', lane: <PackLane /> },
  { name: ['Vinyl Soft'], h: 'h-8', color: '#233d96', text: '#d5e0ff', icon: 'wave', last: true, lane: split(0, 136, 8).map(([s, e]) => (
    <Clip key={s} s={s} e={e} color="#223a90" text="#c2d4ff" label="Vinyl Soft" inner={PATHS.vinyl} innerN={170} />
  )) },
  { name: ['bass shots'], h: 'h-[136px]', color: '#5a3272', text: '#dfc6e6', icon: 'down', group: true, lane: <BassLane /> },
  mini('#c5c7bd', strips([[46, 48], [82, 83], [83, 84], [116, 118]], '#c4c8be')),
  mini('#a3ae62', <><Stripes at={[...steps(16.4, 48, 2), ...steps(52.4, 118, 2)]} w={0.12} color="#2a3c74" /><Stripes at={[19.4, 23.4, 27.4, 31.4, 35.4, 43.4, ...steps(55.4, 84, 4), 85.7, 89.4, 93, 97.4, 101.4, 105.4, 109.4, 113.4]} w={0.6} color="#8e1f1f" /></>),
  mini('#aed2b2', strips([[52, 81]], '#aedcb4')),
  mini('#7a2828', <Stripes at={[...steps(17.9, 48, 2), ...steps(53.9, 84, 2), ...steps(85.9, 118, 2)]} w={0.15} color="#8e2424" />),
  mini('#a9b26a', <>{strips([[40.5, 41.6], [41.6, 43], [43.2, 44.8], [44.8, 48.5], [110.5, 112], [112, 114], [114.3, 118.5]], '#9ca45c')}<Stripes at={steps(60.3, 84, 1).flatMap((b) => [b, b + 0.3])} w={0.22} color="#9ca45c" /></>),
  mini('#7a4a4c', strips([[60, 84]], '#7c484c')),
  mini('#0d1c5c', strips([[0, 32], [40, 68], [94, 126]], '#0c1c60'), true),
  { name: ['Splice – Bob', 'Sinclar Sample Pa..'], h: 'h-[110px]', color: '#afbb76', text: '#ffffff', icon: 'up', group: true, lane: <SpliceLane /> },
  { name: [' vocal vol'], h: 'h-[78px]', color: '#2b3f52', text: '#a8c4dc', icon: 'auto', last: true, lane: <VocalLane /> },
  { name: ['Odd Frequency –', 'HYPE'], h: 'h-[136px]', color: '#636c34', text: '#dfe4bc', icon: 'down', group: true, selected: true, lane: <HypeLane /> },
  mini('#54497a', <>{strips([[47, 54], [117, 124]], '#4f568a')}{strips([[84, 86]], '#5c4f8a')}</>),
  mini('#4f3f2d', strips([[76.5, 80.2], [80.5, 85.7], [102.5, 106.2], [106.5, 110.1], [110.3, 118]], '#54432e')),
  mini('#3f8896', <>{strips([[24, 32], [32, 40]], '#3f8494')}{strips([[60, 81]], '#58907e')}</>, true),
]

function Led() {
  return (
    <button
      aria-label="Mute track"
      className="size-5 rounded-full border-2 border-[#173008] bg-gradient-to-b from-[#7fd318] to-[#d4f89a] shadow-[0_0_0_1px_rgba(255,255,255,0.35)]"
    />
  )
}

function TrackIcon({ kind, big }: { kind: IconKind; big: boolean }) {
  if (kind === 'wave') return <WaveIcon className={big ? 'h-6 w-8' : 'h-[18px] w-6'} />
  if (kind === 'auto') return <AutoIcon className={big ? 'h-[26px] w-8' : 'h-5 w-6'} />
  if (kind === 'note')
    return (
      <svg className="h-[22px] w-4" viewBox="0 0 16 22" fill="currentColor" aria-hidden="true">
        <path d="M8 0H10C10 4 15 6 14 13C13 9 11 8.500 10 8.500V17C10 20 7 22 4.500 22C2 22 .8 20.500 1 19C1.300 16.500 5 15 8 16Z" />
      </svg>
    )
  if (kind === 'bars')
    return (
      <svg className="h-[23px] w-6" viewBox="0 0 24 23" fill="currentColor" aria-hidden="true">
        <path d="M0 0H5V23H0ZM6.500 1.500H11.500V21.500H6.500ZM13 3H18V20H13ZM19 5H24V18H19Z" />
        <path d="M2 3V20M9 5V18M15.500 6V17M21.500 8V15" stroke="#275a36" strokeWidth="1" />
      </svg>
    )
  return null
}

const isTight = (line: string) => ['Mish_Drums_Ride', 'Producer Pack V.1', 'Sinclar Sample Pa..'].includes(line)

function TrackHeader({ track }: { track: Track }) {
  const { name, h, color, text, icon, group, last, selected } = track
  const big = h !== 'h-8' && h !== 'h-2'
  return (
    <div className={`flex ${h}`}>
      <div className={`flex min-w-0 flex-1 bg-[#1c2930] ${group ? 'ml-[10px]' : 'ml-[22px]'}`}>
        <div
          className={`relative min-w-0 flex-1 overflow-hidden border-r-2 border-black/25 ${group ? 'rounded-tr-xl rounded-bl-xl' : ''} ${last ? (h === 'h-2' ? 'rounded-br-lg' : 'rounded-br-xl') : ''}`}
          style={{ backgroundColor: color, color: text }}
        >
          {h === 'h-8' && (
            <div className="flex h-full items-center">
              <span className="flex-1 pb-[3px] pl-[5px] text-[22px] leading-7 whitespace-pre">{name[0]}</span>
              <span className="flex w-6 justify-center">
                <TrackIcon kind={icon} big={false} />
              </span>
              <span className="flex w-[46px] justify-center pl-[10px]">
                <Led />
              </span>
            </div>
          )}
          {big && (
            <>
              <div className="pt-[2px] pl-[5px]">
                {name.map((line) => (
                  <p key={line} className={`leading-[30px] whitespace-pre ${isTight(line) ? 'text-[22px]' : 'text-[25px]'}`}>
                    {line}
                  </p>
                ))}
              </div>
              <div className={`absolute bottom-2 flex gap-1 opacity-35 ${group ? 'left-7' : 'left-4'}`}>
                <i className="size-1 bg-black" />
                <i className="size-1 bg-black" />
                <i className="size-1 bg-black" />
              </div>
              <div className="absolute right-[10px] bottom-[10px] flex items-center gap-3">
                {(icon === 'up' || icon === 'down') && (
                  <svg className={`h-[10px] w-[17px] ${icon === 'down' ? 'rotate-180' : ''} ${name[0] === 'Splice – Bob' ? 'text-[#23240f]' : ''}`} viewBox="0 0 17 10" fill="currentColor" aria-hidden="true">
                    <path d="M0 10L8.500 0L17 10Z" />
                  </svg>
                )}
                <TrackIcon kind={icon} big />
                <Led />
              </div>
            </>
          )}
        </div>
        <div className="w-[2px]" />
      </div>
      <div className="flex w-5 border-r-2 border-[#1b242c] border-b border-b-[#202c33] bg-[#304048]">
        {selected && <div className="my-px flex-1 rounded-[2px] border-2 border-[#b0e850]" />}
      </div>
    </div>
  )
}

function Grid() {
  return (
    <svg className="absolute inset-0 h-full w-full" viewBox={`0 0 ${BARS} 1`} preserveAspectRatio="none" shapeRendering="crispEdges" aria-hidden="true">
      <rect width={BARS} height="1" fill="#3c424b" />
      {steps(0, BARS, 8).map((b) => (
        <rect key={b} x={b} width="4" height="1" fill="#434952" />
      ))}
      {steps(0, BARS, 1).map((b) => (
        <path key={b} d={`M${b + 0.03} 0V1`} stroke="#1d242d" strokeWidth="2" vectorEffect="non-scaling-stroke" />
      ))}
    </svg>
  )
}

const BROWSER: [string, string, string, string, string][] = [
  ['kick', '#a878d4', '#ffffff', '#ffffff', 'sine'],
  ['hat', '#6a2c70', '#dfa8e4', '#e4a0ec', 'decay'],
  ['bass C', '#9486d2', '#ffffff', '#ffffff', 'rise'],
  ['D2 shot', '#aa4468', '#ffeef6', '#ffb8dc', 'rise'],
  ['top 1', '#47389a', '#f0dcf4', '#bca8ff', 'beat'],
  ['top 2', '#b97454', '#ffffff', '#fff0cc', 'beat'],
  ['clap', '#ac4644', '#ffe8ec', '#ffb8b4', 'decay'],
  ['pluck 1', '#82336e', '#e0b8e4', '#ffa8ec', 'small'],
  ['pluck 3 layer', '#748acc', '#ffffff', '#ffffff', 'tiny'],
  ['pluck 2', '#968d4c', '#e8f0e4', '#ffffc0', 'blob'],
  [' Disco_Hit', '#447552', '#b8e4c4', '#b8f8d0', 'tiny'],
  ['80_E_CookieSlapBas..', '#bac688', '#1e3028', '#ffffff', 'noise'],
  [' synth slap shot', '#3a4a78', '#eccccc', '#acc0f8', 'small'],
  ['slap shot x', '#904848', '#e4dcf0', '#ffc0c0', 'slap'],
  ['Bass – Slide 1 (F) – 8A', '#7c6f84', '#f0e8f4', '#fff0ff', 'thin'],
  ['Bass – Slide 1 (F) – 8..', '#7c6f84', '#f0e8f4', '#fff0ff', 'thin'],
  ['789_JC_V1_FUNKY_S..', '#97a25c', '#ffffff', '#ffffe0', 'late'],
  ['789_JC_V1_FUNKY_S..', '#d48884', '#ffffff', '#ffffff', 'late'],
  ['Odd Frequency – Hy..', '#bcc88c', '#1e3028', '#ffffff', 'hype'],
  ['Odd Frequency – Hy..', '#8cacc8', '#ffffff', '#ffffff', 'hype'],
  ['Odd Frequency – Hy..', '#685844', '#c8d0dc', '#ecd4bc', 'hype'],
  ['snare roll', '#437058', '#c4e4c8', '#b8f0d4', 'roll'],
  ['crash', '#e2c8e4', '#962c90', '#ffffff', 'tiny'],
  ['TFH bongo', '#bc9896', '#ffffff', '#ffffff', 'beat'],
  ['ride 1', '#b09060', '#ffffff', '#fffbd0', 'beat'],
  ['tone', '#dc7892', '#ffffff', '#ffffff', 'tone'],
  ['DI1_65_Am_Piano_..', '#b6c284', '#1e3028', '#ffffff', 'noise'],
  ['fx speed', '#b2a4b4', '#ffffff', '#ffffff', 'roll'],
  ['BOB_SINCLAR_vocal..', '#aec09c', '#243c34', '#ffffff', 'noise'],
  ['100_Am_A06_Wah –..', '#b8c488', '#1e3028', '#ffffff', 'noise'],
  ['Nova_Tamb', '#382c78', '#e4b4c0', '#b4a0f4', 'beat'],
  [' Mish_Drums_Rides', '#cf78dc', '#ffffff', '#ffffff', 'roll'],
  ['noise doctor_long', '#293970', '#ecc0b0', '#a0b4f0', 'small'],
  [' fx_oneshot_riser', '#d6d6e4', '#824e50', '#ffffff', 'thin'],
  ['Vinyl Soft', '#4058a8', '#ffffff', '#b8d0ff', 'roll'],
]

const SHAPES: Record<string, (t: number, r: number) => number> = {
  decay: (t, r) => Math.max(0.04, (0.7 + r * 0.3) * Math.exp(-t * 3.2)),
  beat: (t, r) => (Math.floor(t * 160) % 10 === 0 ? 0.95 : Math.floor(t * 160) % 10 < 3 ? 0.35 + r * 0.2 : 0.06 + r * 0.1),
  small: (t, r) => Math.max(0.02, (0.5 + r * 0.2) * Math.exp(-t * 4)),
  tiny: (t, r) => Math.max(0.02, (0.8 + r * 0.2) * Math.exp(-t * 14)),
  thin: (t, r) => Math.max(0.02, 0.08 + r * 0.14 - t * 0.08),
  late: (t, r) => (t > 0.1 && t < 0.3 ? (0.35 - t) * 1.8 + r * 0.2 : 0.02),
  blob: (t) => 0.04 + 0.4 * Math.exp(-(((t - 0.37) * 14) ** 2)) + 0.28 * Math.exp(-(((t - 0.2) * 18) ** 2)) + 0.15 * Math.exp(-(((t - 0.75) * 12) ** 2)),
  noise: (t, r) => 0.04 + Math.max(0, Math.sin(t * 30)) * r * 0.6,
  slap: (t, r) => (t > 0.43 && t < 0.52 ? 0.8 - (t - 0.43) * 5 + r * 0.1 : t > 0.6 && t < 0.68 ? 0.6 - (t - 0.6) * 7 : t < 0.35 ? 0.1 + r * 0.3 : 0.02),
  hype: (t, r) => (t < 0.1 || (t > 0.2 && t < 0.32) || (t > 0.5 && t < 0.6) || (t > 0.72 && t < 0.82) ? 0.4 + r * 0.4 : 0.02),
  roll: (_, r) => 0.12 + r * 0.25,
  tone: (t, r) => (t > 0.13 && t < 0.78 ? 0.9 + r * 0.1 : 0.02),
}

function sinePath(rise: boolean) {
  let d = 'M0 20'
  for (let x = 1; x <= 262; x++) {
    const amp = rise ? Math.max(0.6, (x / 262) ** 1.6 * 14) : Math.max(3, 18 - x / 17)
    const freq = rise ? 0.72 : 0.3 + Math.max(0, 60 - x) / 150
    d += `L${x} ${(20 + Math.sin(x * freq) * amp).toFixed(1)}`
  }
  return d
}

function BrowserItem({ item, index }: { item: (typeof BROWSER)[number]; index: number }) {
  const [name, color, text, icon, shape] = item
  const line = shape === 'sine' || shape === 'rise'
  return (
    <li>
      <button
        className={`relative flex h-11 w-full items-center overflow-hidden rounded-[3px] text-left shadow-[inset_0_1px_0_rgba(255,255,255,0.2)] ${index === 0 ? 'border-2 border-[#b0e850] pl-[5px]' : 'border border-black/25 pl-[6px]'}`}
        style={{ backgroundColor: color }}
      >
        <span className="absolute inset-0 bg-gradient-to-b from-white/5 to-black/5" />
        <svg className="absolute inset-y-0 left-[3px] h-full w-[262px]" viewBox={line ? '0 0 262 40' : '0 0 160 100'} preserveAspectRatio="none" aria-hidden="true">
          {line ? (
            <path d={sinePath(shape === 'rise')} fill="none" stroke="#000" strokeWidth="1.6" opacity="0.25" />
          ) : (
            <path d={wavePath(index * 7 + 5, 160, SHAPES[shape])} fill="#000" opacity="0.22" />
          )}
        </svg>
        <span className="relative flex-1 pb-[2px] text-[22px] leading-7 whitespace-pre" style={{ color: text }}>
          {name}
        </span>
        <span className="relative pr-1 pb-1" style={{ color: icon }}>
          <WaveIcon className="h-6 w-8" />
        </span>
      </button>
    </li>
  )
}

function Browser() {
  return (
    <aside className="flex w-[314px] shrink-0 flex-col">
      <div className="flex h-[82px] items-end border-b-2 border-[#20292f] pb-4 text-[#535d63]">
        <button aria-label="Patterns" className="flex w-24 justify-center">
          <PianoIcon className="h-[22px] w-[30px]" />
        </button>
        <button aria-label="Audio clips" className="flex w-24 justify-center text-[#d4dce0]">
          <WaveIcon className="h-7 w-[42px]" />
        </button>
        <button aria-label="Automation clips" className="flex w-24 justify-center">
          <AutoIcon className="h-[26px] w-8" />
        </button>
      </div>
      <div className="flex flex-1 border-r-2 border-[#1d262c] bg-[#323d45]">
        <ul className="flex flex-1 flex-col gap-1 border-l-2 border-[#222b31] pt-[6px] pr-[2px] pl-[6px]">
          {BROWSER.map((item, i) => (
            <BrowserItem key={i} item={item} index={i} />
          ))}
        </ul>
        <div className="w-8 border-l-2 border-[#1d262c] bg-[#353f47]">
          <div className="mr-[2px] flex h-[29px] items-center justify-center border-2 border-[#68737a] bg-[#515b62]">
            <i className="size-1 bg-[#1d262c]" />
          </div>
        </div>
      </div>
    </aside>
  )
}

function Tool({ name, active, children }: { name: string; active?: boolean; children: ReactNode }) {
  return (
    <button aria-label={name} className={`flex w-[42px] justify-center ${active ? 'text-[#6cc4fc]' : 'text-[#d0d8dc]'}`}>
      <svg className="size-[30px]" viewBox="0 0 30 30" fill="none" stroke="currentColor" strokeWidth="2.4" aria-hidden="true">
        {children}
      </svg>
    </button>
  )
}

function Chevron() {
  return (
    <svg className="h-4 w-[9px] text-[#7d878c]" viewBox="0 0 9 16" fill="currentColor" aria-hidden="true">
      <path d="M0 0L9 8L0 16Z" />
    </svg>
  )
}

function TitleBar() {
  return (
    <header className="flex h-12 items-center border-t-2 border-[#2b3338] bg-[#414a4f] pb-1 pl-[7px]">
      <Tool name="Menu"><path d="M10 7V23L20 15Z" fill="currentColor" stroke="none" /></Tool>
      <Tool name="Snap">
        <path d="M2 28V13C2 5 7 1 15 1S28 5 28 13V28H19V13C19 10 18 8.500 15 8.500S11 10 11 13V28ZM4 22H9V25.500H4ZM21 22H26V25.500H21Z" fill="currentColor" fillRule="evenodd" stroke="none" />
      </Tool>
      <div className="w-6" />
      <Tool name="Draw"><path d="M3 4L10 3L27 21L25 28L19 27L3 11ZM5 10L11 4M10 15L15 9M10 13L22 26M14 10L26 22" strokeWidth="2" /></Tool>
      <Tool name="Paint" active>
        <path d="M10 0L19 8L21 14L16 19L8 21L2 28L5 18L1 14L5 9L3 6Z" fill="currentColor" stroke="none" />
        <path d="M17 16L22 21" strokeWidth="3" />
        <circle cx="25" cy="25" r="3" />
      </Tool>
      <Tool name="Delete"><circle cx="15" cy="15" r="12" strokeWidth="2.600" /><path d="M7 23L23 7" /></Tool>
      <Tool name="Mute"><path d="M1 10H6L14 1V29L6 20H1Z" fill="currentColor" stroke="none" /><path d="M18 10L29 21M29 10L18 21" /></Tool>
      <Tool name="Slip"><path d="M0 15L9 6V12H12V5H14V25H12V18H9V24ZM30 15L21 6V12H18V5H16V25H18V18H21V24Z" fill="currentColor" stroke="none" /></Tool>
      <Tool name="Slice"><path d="M0 2L15 26M5 2L16 20" strokeWidth="2" /><path d="M10 2H27C29 12 29 22 27 28C22 28 17 24 16 16ZM22 14V19H25V14Z" fill="currentColor" fillRule="evenodd" stroke="none" /></Tool>
      <Tool name="Select"><path d="M3 10V3H10M20 3H27V10M27 20V27H20M10 27H3V20" strokeWidth="3" /><path d="M3 14V16M27 14V16" strokeWidth="2" /></Tool>
      <Tool name="Zoom"><circle cx="14" cy="13" r="11.500" strokeWidth="2.600" /><path d="M23 22L28 28" strokeWidth="4" /><path d="M8 13C8 9 10 7 13 6" strokeWidth="2" /></Tool>
      <Tool name="Play selected"><path d="M1 9H6L14 1V29L6 21H1Z" fill="currentColor" stroke="none" /><path d="M18 5V25M23 6V24M28 7V23" strokeWidth="2" /></Tool>
      <div className="w-[22px]" />
      <Tool name="Preview"><path d="M2 10H7L14 3V27L7 20H2Z" strokeWidth="2.200" /><path d="M20 6V24L29 15Z" fill="currentColor" stroke="none" /></Tool>
      <h1 className="flex items-center gap-[13px] pb-px pl-2 font-['Noto_Sans'] text-[26px] leading-9 text-[#d3dbdf]">
        Playlist - Arrangement
        <Chevron />
        kick
        <Chevron />
      </h1>
      <div className="flex-1" />
      <div className="flex pr-[6px] text-[#dde3e6]">
        {['M8 7H22V11H8Z', 'M6 12H20V26H6ZM8.500 16V23.500H17.500V16ZM10 6H24V21H22V9H10Z', 'M7 5L15 12L23 5L24 6L18 15L24 25L23 26L15 19L7 26L6 25L12 15L6 6Z'].map((d, i) => (
          <button key={d} aria-label={['Minimize', 'Restore', 'Close'][i]} className="flex w-[38px] justify-center">
            <svg className="size-[30px]" viewBox="0 0 30 30" fill="currentColor" fillRule="evenodd" aria-hidden="true">
              <path d={d} />
            </svg>
          </button>
        ))}
      </div>
    </header>
  )
}

function ModeTabs() {
  return (
    <div className="flex w-[232px] shrink-0 border-r-2 border-[#1d262c] pl-[10px]">
      <button aria-label="Add track" className="relative w-[59px]">
        <svg className="absolute inset-0 h-full w-full" viewBox="0 0 59 80" preserveAspectRatio="none" aria-hidden="true">
          <path d="M0 80L18 8Q21 1 26 1H59V80Z" fill="#515b60" stroke="#1f282d" strokeWidth="2" />
          <path d="M2 78L20 9Q22 3 27 3H57V78Z" fill="none" stroke="#6b767b" />
          <path d="M33 49V65M25 57H41" stroke="#dde5e8" strokeWidth="4" />
        </svg>
      </button>
      <div className="grid flex-1 grid-cols-3 grid-rows-2 place-items-center border-2 border-[#6b767b] border-l-[#1f282d] bg-[#515b60] px-1 text-[#858f94]">
        <button aria-label="Audio" className="text-[#e4eaec]"><WaveIcon className="h-7 w-[42px]" /></button>
        <button aria-label="Automation"><AutoIcon className="h-[26px] w-8" /></button>
        <button aria-label="Patterns"><PianoIcon className="h-[22px] w-[30px]" /></button>
        <button aria-label="Crossfade" className="text-[#e4eaec]">
          <svg className="h-[18px] w-5" viewBox="0 0 20 18" fill="none" stroke="currentColor" strokeWidth="2" aria-hidden="true"><path d="M1 1C9 1 9 17 19 17M19 1C9 1 9 17 1 17" /></svg>
        </button>
        <button aria-label="Curve">
          <svg className="h-[18px] w-5" viewBox="0 0 20 18" fill="none" stroke="currentColor" strokeWidth="1.600" aria-hidden="true"><path d="M1 17C12 17 6 1 19 1M2 0V18M1 9H19" /></svg>
        </button>
        <button aria-label="Stretch">
          <svg className="h-4 w-5" viewBox="0 0 20 16" fill="none" stroke="currentColor" strokeWidth="2" aria-hidden="true"><path d="M6 2L1 8L6 14M14 2L19 8L14 14M1 8H19M10 4V12" /></svg>
        </button>
      </div>
    </div>
  )
}

// [y, height, colour, ranges] of the lanes drawn in the overview
const MAP: [number, number, string, Range[]][] = [
  [1, 2, '#f4ccff', [[0, 6.4], [13, 17], [18, 26], [27, 32], [34, 38], [52, 62], [64, 72], [86, 92], [94, 98], [102, 104], [110, 120], [122, 132], [134, 137]]],
  [3, 1, '#7ed0d0', [[11, 13], [24, 26], [48, 50], [118, 122]]],
  [4, 1, '#5f9a86', [[6, 16], [18, 46], [60, 82], [94, 134]]],
  [6, 1, '#4438a0', [[40, 48], [60, 68], [76, 84], [102, 110]]],
  [7, 1, '#e070ec', [[32, 40], [68, 76], [94, 102], [110, 134]]],
  [9, 2, '#c6d65c', [[48, 76]]],
  [11, 1, '#f07ca0', [[0, 1], [4, 5], [8, 9], [12, 13], [40, 47], [76, 83], [110, 130]]],
  [12, 1, '#c0904c', [[0, 46], [52, 82], [86, 116], [118, 134]]],
  [15, 1, '#b87898', [[16, 46], [52, 82], [86, 116]]],
  [16, 2, '#b49494', [[0, 39], [40, 46], [52, 82], [86, 116], [118, 134]]],
  [19, 1, '#3c3ca0', [[0, 46], [52, 82], [86, 116], [118, 134]]],
  [20, 1, '#d07848', [[16, 46], [52, 82], [86, 116]]],
  [22, 2, '#4864b8', [[0, 136]]],
  [22, 1, '#98a860', [[2.5, 4.5], [6.5, 8.500], [10.5, 12.5], [14.5, 16], [25, 46], [103, 116]]],
  [24, 2, '#b04070', [[16, 48], [48, 84], [86, 118]]],
  [27, 1, '#98b890', [[52, 84], [94, 110]]],
  [30, 1, '#2c3c84', [[0, 32], [40, 68], [94, 126]]],
  [33, 1, '#a06c9c', [[48, 54], [84, 86], [117, 124]]],
]

function ScrollButton({ label, d, className }: { label: string; d: string; className: string }) {
  return (
    <button aria-label={label} className={`flex shrink-0 items-center justify-center border-2 border-[#68737a] bg-[#515b62] ${className}`}>
      <svg className="size-5" viewBox="0 0 20 20" fill="none" stroke="#1d262c" strokeWidth="2" aria-hidden="true">
        <path d={d} />
      </svg>
    </button>
  )
}

function Overview() {
  return (
    <div className="flex h-[40px] border-b-2 border-[#1d262c] bg-[#363f46]">
      <ScrollButton label="Scroll left" d="M13 3L7 10L13 17" className="h-[38px] w-10" />
      <div className="flex-1">
        <svg className="h-[38px] w-[89.5%] border-2 border-[#68777a] bg-[#4f5e64]" viewBox="0 0 137 34" preserveAspectRatio="none" aria-hidden="true">
          {MAP.flatMap(([y, h, fill, ranges], i) =>
            ranges.map(([s, e]) => <rect key={`${i}-${s}`} x={s} y={y} width={e - s} height={h} fill={fill} />),
          )}
        </svg>
      </div>
      <ScrollButton label="Scroll right" d="M7 3L13 10L7 17" className="h-[38px] w-[38px]" />
    </div>
  )
}

function Ruler() {
  return (
    <div className="relative mr-1 flex h-[38px] border-t-2 border-b-2 border-[#c4787a] border-b-[#b86c6e] bg-gradient-to-b from-[#a85e60] to-[#934b4d]">
      {steps(0, BARS, 4).map((b) => (
        <span key={b} className="min-w-0 flex-1 pl-px text-[20px] leading-[36px] text-[#fac8c4]">
          {b + 1}
        </span>
      ))}
      <svg className="absolute top-0 left-0 h-[22px] w-[17px]" viewBox="0 0 17 22" aria-hidden="true">
        <path d="M0 1H15L15 6L4 18L0 20Z" fill="#a4d84c" stroke="#2c3c14" />
        <path d="M0 3H14" stroke="#e8fc98" strokeWidth="3" />
      </svg>
    </div>
  )
}

export default function App() {
  return (
    <div className="flex min-h-screen flex-col bg-[#3f484e] font-[Roboto,'Noto_Sans',sans-serif]">
      <TitleBar />
      <div className="flex flex-1">
        <Browser />
        <main className="flex min-w-0 flex-1 flex-col">
          <div className="flex h-[82px] border-b-2 border-[#1d262c]">
            <ModeTabs />
            <div className="min-w-0 flex-1 border-t-2 border-[#1d262c]">
              <Overview />
              <Ruler />
            </div>
            <div className="flex w-[42px] flex-col gap-[2px] bg-[#1d262c] pt-[2px] pr-[2px] pl-[2px]">
              <ScrollButton label="Zoom" d="M10 6V14" className="h-[38px]" />
              <ScrollButton label="Scroll up" d="M3 13L10 6L17 13" className="h-[38px]" />
            </div>
          </div>
          <div className="flex border-b-4 border-[#2c393f] bg-[#2a3439]">
            <div className="w-[232px] shrink-0">
              {TRACKS.map((track, i) => (
                <TrackHeader key={i} track={track} />
              ))}
            </div>
            <div className="relative min-w-0 flex-1 overflow-hidden">
              <Grid />
              {TRACKS.map((track, i) => (
                <div key={i} className={`relative border-b border-[#171d25] ${track.h}`}>
                  {track.lane}
                </div>
              ))}
            </div>
            <div className="flex w-[46px] flex-col border-l-[6px] border-[#1d262c] bg-[#353f45] pr-[2px]">
              <div className="h-[66px] border-2 border-[#68737a] bg-[#515b62]" />
              <div className="flex-1" />
              <ScrollButton label="Scroll down" d="M3 7L10 14L17 7" className="h-9" />
            </div>
          </div>
        </main>
      </div>
    </div>
  )
}
